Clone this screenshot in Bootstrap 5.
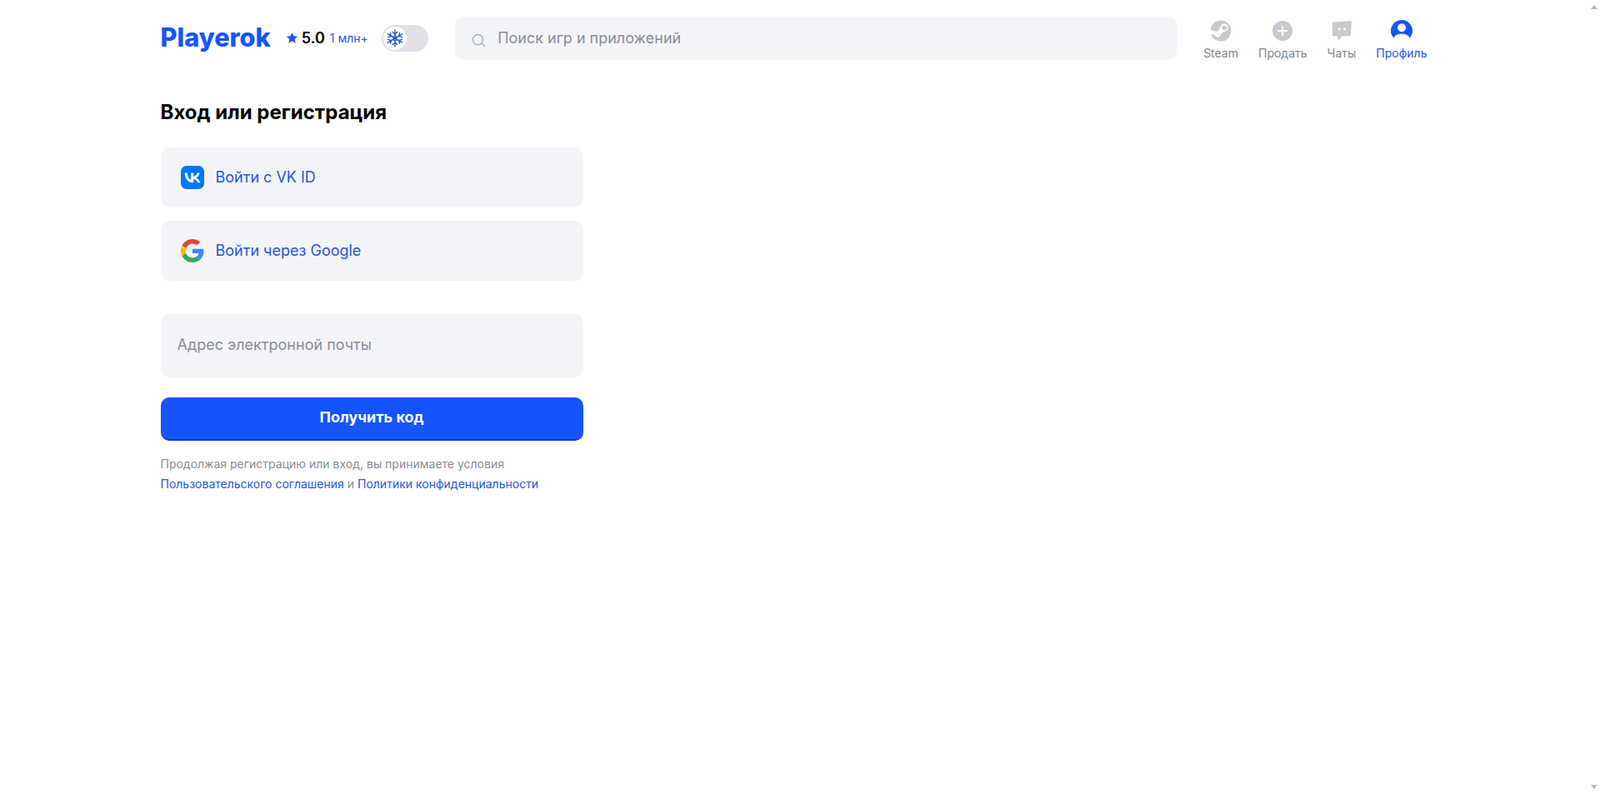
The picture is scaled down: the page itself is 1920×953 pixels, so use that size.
<!DOCTYPE html>
<html lang="ru">
<head>
<meta charset="utf-8">
<title>Playerok</title>
<link href="https://cdn.jsdelivr.net/npm/bootstrap@5.3.0/dist/css/bootstrap.min.css" rel="stylesheet">
<style>
html,body{height:100%;}
body{font-family:Inter,"Noto Sans",sans-serif;background:#fff;color:#000;overflow:hidden;}
.shell{width:1520px;margin-left:192.5px;}
.topbar{height:88px;padding-top:4px;}
.brand{font-size:30.7px;font-weight:800;color:#1654ff;line-height:1;text-decoration:none;width:133px;margin-top:-1px;}
.rate{margin-left:18px;width:103px;margin-top:-1px;}
.rate-num{font-size:18px;font-weight:600;margin-left:4px;}
.rate-cnt{font-size:14px;color:#2458d9;margin-left:6px;white-space:nowrap;}
.toggler{width:56px;height:32px;border-radius:16px;background:#dfe1e6;margin-left:16px;padding:2px;}
.knob{width:28px;height:28px;border-radius:50%;background:#fff;}
.searchbox{width:866px;height:52px;background:#f3f4f8;border-radius:10px;margin-left:32px;padding-left:20px;}
.searchbox input{border:0;background:transparent;outline:0;font-size:18px;margin-left:12px;margin-bottom:2px;width:780px;color:#000;}
.searchbox input::placeholder,.mail::placeholder{color:#8a8d96;opacity:1;}
.tabs{margin-left:32px;gap:24px;margin-top:3px;}
.tab{font-size:14px;color:#82858f;text-decoration:none;line-height:17px;}
.tab svg{display:block;margin:0 auto 5px;}
.tab.on{color:#2458d9;}
.ttl{font-size:24px;font-weight:700;line-height:32px;margin:31px 0 26px;}
.form-col{width:507px;}
.soc{height:72px;background:#f3f4f8;border-radius:10px;padding:0 0 2px 24px;font-size:18px;color:#2458d9;text-decoration:none;margin-bottom:16px;gap:14px;}
.soc svg{margin-top:2px;}
.mail{height:76px;background:#f3f4f8;border-radius:10px;border:0;outline:0;width:100%;font-size:18px;padding:0 20px 3px;margin-top:40px;display:block;font-family:inherit;}
.go{height:52px;width:100%;margin-top:24px;padding:0 0 3px;background:#1654ff;color:#fff;border:0;border-bottom:2px solid #0a3fd4;border-radius:10px;font-size:18px;font-weight:700;}
.go:hover{background:#1654ff;color:#fff;}
.terms{font-size:14px;line-height:24px;color:#8a8d96;margin-top:16px;}
.terms a{color:#2458d9;text-decoration:none;}
.sb-arrow{position:absolute;right:3px;width:0;height:0;border-left:4.5px solid transparent;border-right:4.5px solid transparent;}
.sb-up{top:6px;border-bottom:5px solid #b5b5b5;}
.sb-down{bottom:6px;border-top:5px solid #b5b5b5;}
</style>
</head>
<body>
<div class="shell">
  <header class="topbar d-flex align-items-center">
    <a class="brand" href="#">Playerok</a>
    <div class="rate d-flex align-items-center">
      <svg width="15" height="15" viewBox="0 0 24 24" fill="#1654ff"><path d="M12 1.5l3.2 7 7.6.8-5.7 5.1 1.6 7.6L12 18.100 5.300 22l1.600-7.600L1.200 9.300l7.600-.8z"/></svg>
      <span class="rate-num">5.0</span><span class="rate-cnt">1 млн+</span>
    </div>
    <div class="toggler flex-shrink-0">
      <div class="knob d-flex align-items-center justify-content-center">
        <svg width="22" height="22" viewBox="0 0 24 24" fill="none" stroke="#2458d9" stroke-width="1.500" stroke-linecap="round">
          <path d="M12 1v22M8.800 3.500L12 6.500l3.200-3M8.800 20.500L12 17.500l3.200 3"/>
          <path d="M2.500 6.500l19 11M2.800 10.500l4.200-1.200L5.900 5M21.200 13.500L17 14.700l1.100 4.300"/>
          <path d="M21.500 6.500l-19 11M21.200 10.500L17 9.300 18.100 5M2.800 13.500L7 14.700 5.900 19"/>
          <path d="M10 9.500l2-1.200 2 1.200v5l-2 1.200-2-1.200z" stroke-width="1.200"/>
        </svg>
      </div>
    </div>
    <div class="searchbox d-flex align-items-center flex-shrink-0">
      <svg width="17" height="17" viewBox="0 0 18 18" fill="none" stroke="#a9acb5" stroke-width="1.500" class="flex-shrink-0 mt-1"><circle cx="8" cy="8" r="6.500"/><path d="M13 13l3.500 3.500" stroke-linecap="round"/></svg>
      <input type="text" placeholder="Поиск игр и приложений">
    </div>
    <nav class="tabs d-flex">
      <a class="tab text-center" href="#">
        <svg width="26" height="26" viewBox="0 0 26 26"><path fill="#c8c9cf" d="M13 .5A12.500 12.500 0 0 0 .6 11.400l6.700 2.800a3.500 3.500 0 0 1 2.100-.6l3-4.300a4.700 4.700 0 1 1 4.800 4.700l-4.300 3.100a3.500 3.500 0 0 1-6.900.9L1 16.700A12.500 12.500 0 1 0 13 .5z"/><circle cx="17.200" cy="9.400" r="2.900" fill="#c8c9cf"/><path fill="#c8c9cf" d="M8 21c1.200.500 2.300-.1 2.800-1.100s0-2.200-1.100-2.700l-1.500-.6c1-.2 2 .2 2.600 1.100.500.900.500 1.900 0 2.700-.7 1.200-2.200 1.700-3.500 1.200-.6-.3-1.100-.8-1.300-1.300z"/></svg>
        Steam
      </a>
      <a class="tab text-center" href="#">
        <svg width="26" height="26" viewBox="0 0 26 26"><circle cx="13" cy="13" r="12" fill="#c8c9cf"/><path d="M13 8v10M8 13h10" stroke="#fff" stroke-width="2.200" stroke-linecap="round"/></svg>
        Продать
      </a>
      <a class="tab text-center" href="#">
        <svg width="26" height="26" viewBox="0 0 26 26"><path fill="#c8c9cf" d="M2.800 2.500L24 1.300c.6 0 1 .4 1 1l-1.200 16c0 .5-.4.900-.9.900l-9.400.2-4.700 4.800-.7-4.800-5.200-.2c-.6 0-1-.4-1-1L1.800 3.500c0-.6.400-1 1-1z"/><circle cx="10" cy="11" r="1.400" fill="#fff"/><circle cx="16.500" cy="11" r="1.400" fill="#fff"/></svg>
        Чаты
      </a>
      <a class="tab on text-center" href="#">
        <svg width="26" height="26" viewBox="0 0 26 26"><path fill="#1654ff" d="M13 0a13 13 0 0 1 9.800 21.500C21 18 17.500 16.500 13 16.500S5 18 3.200 21.500A13 13 0 0 1 13 0z"/><circle cx="13" cy="9.300" r="5" fill="#fff"/></svg>
        Профиль
      </a>
    </nav>
  </header>
  <main class="form-col">
    <h1 class="ttl">Вход или регистрация</h1>
    <a class="soc d-flex align-items-center" href="#">
      <svg width="28" height="28" viewBox="0 0 28 28"><rect width="28" height="28" rx="7" fill="#0077ff"/><path fill="#fff" d="M14.900 20.200C8.500 20.200 4.900 15.800 4.700 8.500h3.200c.1 5.300 2.500 7.600 4.300 8V8.500h3v4.600c1.800-.2 3.800-2.300 4.400-4.600h3c-.5 2.900-2.600 5-4.100 5.900 1.500.7 3.900 2.600 4.800 5.800h-3.300c-.7-2.200-2.500-3.900-4.800-4.100v4.100z"/></svg>
      Войти с VK ID
    </a>
    <a class="soc d-flex align-items-center" href="#">
      <svg width="28" height="28" viewBox="0 0 48 48"><path fill="#EA4335" d="M24 9.500c3.500 0 6.700 1.300 9.100 3.500l6.800-6.800C35.800 2.400 30.200 0 24 0 14.600 0 6.500 5.400 2.600 13.200l7.900 6.100C12.400 13.700 17.700 9.500 24 9.500z"/><path fill="#4285F4" d="M47 24.500c0-1.600-.2-3.100-.4-4.500H24v9h12.900c-.6 3-2.200 5.500-4.700 7.200l7.700 6C44.400 38 47 31.800 47 24.500z"/><path fill="#FBBC05" d="M10.500 28.700c-.5-1.400-.8-3-.8-4.700s.3-3.200.8-4.700l-7.900-6.100C1 16.400 0 20.100 0 24s1 7.600 2.600 10.800z"/><path fill="#34A853" d="M24 48c6.500 0 11.900-2.100 15.900-5.800l-7.700-6c-2.200 1.500-4.900 2.300-8.200 2.300-6.300 0-11.600-4.200-13.500-9.800l-7.900 6.100C6.500 42.600 14.600 48 24 48z"/></svg>
      Войти через Google
    </a>
    <input class="mail" type="text" placeholder="Адрес электронной почты">
    <button class="go btn" type="button">Получить код</button>
    <p class="terms">Продолжая регистрацию или вход, вы принимаете условия<br><a href="#">Пользовательского соглашения</a> и <a href="#">Политики конфиденциальности</a></p>
  </main>
</div>
<div class="sb-arrow sb-up"></div>
<div class="sb-arrow sb-down"></div>
<script src="https://cdn.jsdelivr.net/npm/bootstrap@5.3.0/dist/js/bootstrap.bundle.min.js"></script>
</body>
</html>
